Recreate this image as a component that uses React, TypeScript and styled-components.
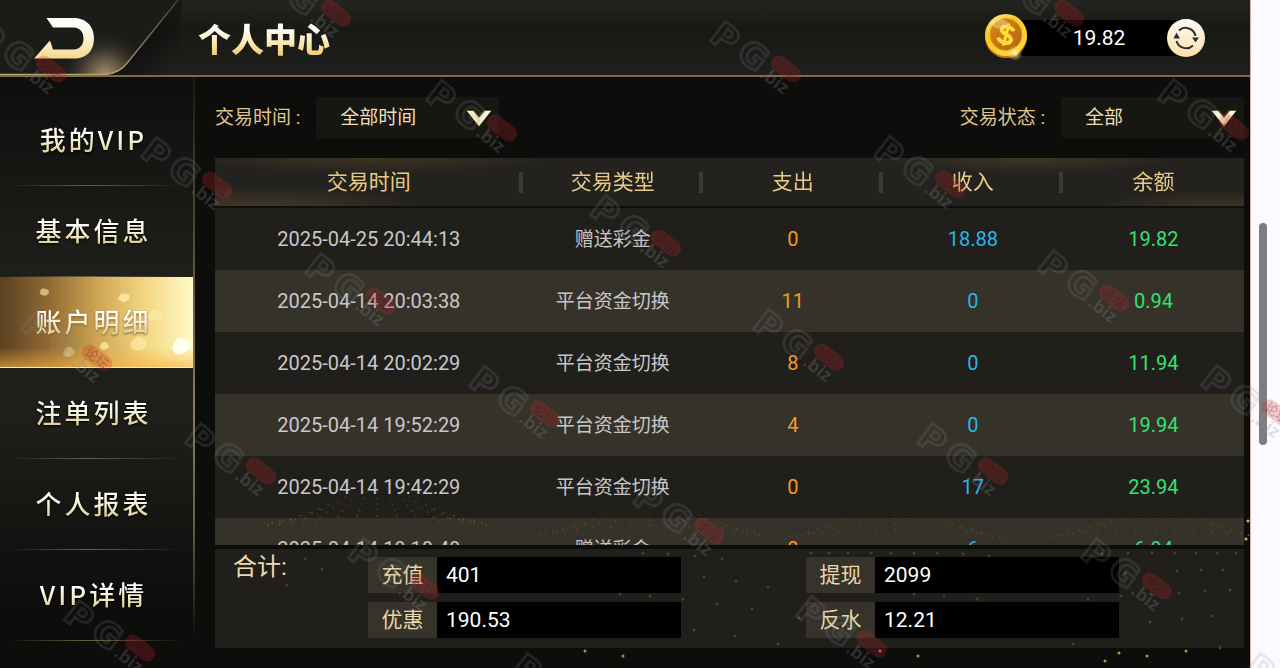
import React from "react";
import styled, { createGlobalStyle, css } from "styled-components";

const sans = `Roboto, "Noto Sans CJK SC", sans-serif`;
const cjk = `"Noto Sans CJK SC", sans-serif`;

const GlobalStyle = createGlobalStyle`
  * { box-sizing: border-box; }
  body { margin: 0; background: #0d0d0c; font-family: ${sans}; }
  button, select, input { font: inherit; }
`;

const Page = styled.div`
  position: relative;
  display: flex;
  height: 100vh;
  overflow: hidden;
`;

const Shell = styled.div`
  flex: 1;
  min-width: 0;
  display: flex;
  flex-direction: column;
  background: #0d0d0c;
`;

const Gutter = styled.div`
  width: 30px;
  padding-left: 8px;
  display: flex;
  align-items: center;
  background: #fdfaff;
  border-left: 1px solid #cdb4a8;
`;

const Thumb = styled.div`
  width: 8px;
  height: 222px;
  border-radius: 4px;
  background: #7f7c80;
`;

const Header = styled.header`
  height: 77px;
  display: flex;
  align-items: center;
  border-bottom: 2px solid #7c6a4b;
  background: linear-gradient(180deg, #23231f 0%, #181815 40%, #1f1f1d 100%);
`;

const BackButton = styled.button`
  width: 182px;
  height: 75px;
  padding: 0;
  border: 0;
  background: none;
  cursor: pointer;

  svg { display: block; }
`;

const Title = styled.h1`
  flex: 1;
  margin: 0;
  padding-left: 16px;
  font: 900 33px/44px ${cjk};
  color: transparent;
  background: linear-gradient(180deg, #ffffff 25%, #fdeec2 55%, #f3cf7c 85%);
  background-clip: text;
`;

const Balance = styled.div`
  display: flex;
  align-items: center;
  margin-right: 45px;
`;

const Amount = styled.output`
  width: 162px;
  height: 36px;
  margin: 0 -13px 0 -10px;
  text-align: center;
  font-size: 21px;
  line-height: 36px;
  color: #ffffff;
  background: #000000;
`;

const CoinIcon = styled.svg`
  position: relative;
  display: block;
`;

const RefreshButton = styled.button`
  position: relative;
  width: 38px;
  height: 38px;
  padding: 0;
  border: 0;
  border-radius: 50%;
  background: linear-gradient(180deg, #fffaf0, #fce0ab);
  cursor: pointer;

  svg { display: block; }
`;

const Body = styled.div`
  flex: 1;
  min-height: 0;
  display: flex;
`;

const Sidebar = styled.nav`
  display: flex;
  flex-direction: column;
  width: 195px;
  padding-top: 18px;
  border-right: 2px solid;
  border-image: linear-gradient(180deg, #1d1a14, #57503a 30%, #8b7d55 55%, #6a6044 75%, #0d0d0c 95%) 1;
  background: linear-gradient(180deg, #0e0e0d 0%, #1e1e1a 32%, #1e1e1a 58%, #0d0d0c 90%);
`;

const NavItem = styled.a<{ $active?: boolean }>`
  position: relative;
  display: flex;
  align-items: center;
  justify-content: center;
  height: 91px;
  padding: 0 6px 2px 0;
  border-bottom: 1px solid;
  border-image: linear-gradient(90deg, transparent 4%, #6a5f42 45%, #4b4430 65%, transparent 95%) 1;
  text-decoration: none;

  ${(p) =>
    p.$active &&
    css`
      border-image: none;
      border-color: #fff0b4;
      background:
        linear-gradient(0deg, rgba(246, 176, 60, 0.6), transparent 22%),
        linear-gradient(90deg, #5b4122 0%, #8f6933 25%, #cda452 50%, #f3d680 75%, #fffac8 100%);
    `}
`;

const NavText = styled.span<{ $active?: boolean }>`
  position: relative;
  font: 500 26px/36px ${cjk};
  letter-spacing: 3px;
  color: transparent;
  background: linear-gradient(180deg, #ffffff 30%, #f3eccb 60%, #d9ca8f 90%);
  background-clip: text;
  filter: drop-shadow(0 1px 1px ${(p) => (p.$active ? "#8a6024" : "#000000")});
`;

const Petals = styled.svg`
  position: absolute;
  inset: 0;
`;

const Main = styled.main`
  position: relative;
  flex: 1;
  min-width: 0;
  display: flex;
  flex-direction: column;
  padding: 20px 6px 20px 20px;
`;

const Sparks = styled.svg`
  position: absolute;
  right: 0;
  bottom: 0;
  pointer-events: none;
`;

const Filters = styled.form`
  position: relative;
  display: flex;
  justify-content: space-between;
  margin-bottom: 20px;
`;

const Filter = styled.label`
  display: flex;
  align-items: center;
  gap: 16px;
  font-size: 19px;
  line-height: 41px;
  color: #dfc58d;
`;

const SelectBox = styled.span`
  position: relative;
  display: block;
  width: 183px;
  height: 41px;

  svg {
    position: absolute;
    right: 7px;
    top: 11px;
    pointer-events: none;
  }
`;

const Select = styled.select`
  appearance: none;
  width: 100%;
  height: 100%;
  padding: 0 40px 0 24px;
  border: 0;
  border-radius: 3px;
  font-size: 19px;
  color: #efdfb4;
  background: #161613;
`;

const TableScroll = styled.div`
  position: relative;
  flex: 1;
  min-height: 0;
  overflow-y: auto;
  scrollbar-width: none;
`;

const Table = styled.table`
  width: 100%;
  table-layout: fixed;
  border-collapse: separate;
  border-spacing: 0;
`;

const Col = styled.col<{ $share: number }>`
  width: ${(p) => p.$share}%;
`;

const Head = styled.thead`
  position: sticky;
  top: 0;
  z-index: 1;
  background:
    radial-gradient(ellipse 190px 16px at 15% 0, rgba(96, 74, 44, 0.45), transparent),
    radial-gradient(ellipse 170px 22px at 4% 100%, rgba(110, 86, 50, 0.45), transparent),
    radial-gradient(ellipse 150px 16px at 79% 0, rgba(96, 82, 44, 0.45), transparent),
    radial-gradient(ellipse 130px 18px at 98% 100%, rgba(96, 82, 44, 0.45), transparent),
    #23221e;
`;

const HeadCell = styled.th`
  position: relative;
  height: 50px;
  padding: 0 0 4px;
  border-bottom: 2px solid #100f0d;
  font-size: 21px;
  font-weight: 400;
  color: #e8ca87;

  &:not(:last-child)::after {
    content: "";
    position: absolute;
    right: 0;
    top: 14px;
    width: 4px;
    height: 21px;
    background: #3b3a38;
  }
`;

const Row = styled.tr`
  background: rgba(38, 36, 31, 0.8);

  &:nth-child(even) { background: rgba(64, 60, 50, 0.8); }
`;

const tones = { plain: "#c9c6c9", out: "#f39a25", in: "#2bb5ea", total: "#35e170" };

const Cell = styled.td<{ $tone: keyof typeof tones; $cjk?: boolean }>`
  height: 62px;
  padding: 0 0 ${(p) => (p.$cjk ? 4 : 0)}px;
  text-align: center;
  font-size: ${(p) => (p.$cjk ? 19 : 20)}px;
  color: ${(p) => tones[p.$tone]};
`;

const Summary = styled.section`
  position: relative;
  display: grid;
  grid-template-columns: 153px 1fr 1fr;
  margin-top: 4px;
  height: 99px;
  background: rgba(38, 36, 31, 0.8);
`;

const SummaryTitle = styled.h2`
  margin: 0;
  padding: 3px 0 0 18px;
  font-size: 24px;
  line-height: 30px;
  font-weight: 400;
  color: #ecdcb0;
`;

const FieldColumn = styled.div`
  display: flex;
  flex-direction: column;
  gap: 9px;
  padding-top: 8px;
`;

const Field = styled.label`
  display: flex;
  width: 313px;
  height: 36px;
  max-width: 100%;
  background: #36332a;
`;

const FieldName = styled.span`
  width: 69px;
  text-align: center;
  font-size: 21px;
  line-height: 36px;
  color: #e9d7ab;
`;

const FieldValue = styled.input`
  flex: 1;
  min-width: 0;
  padding: 0 9px;
  border: 0;
  font-size: 21px;
  color: #ffffff;
  background: #000000;
`;

const MarkLayer = styled.div`
  position: absolute;
  inset: 0;
  z-index: 5;
  overflow: hidden;
  pointer-events: none;
`;

const MarkSvg = styled.svg<{ $x: number; $y: number }>`
  position: absolute;
  left: ${(p) => p.$x}px;
  top: ${(p) => p.$y}px;
  overflow: visible;
`;

const navItems = ["我的VIP", "基本信息", "账户明细", "注单列表", "个人报表", "VIP详情"];

const columns = [
  { name: "交易时间", share: 29.9 },
  { name: "交易类型", share: 17.5 },
  { name: "支出", share: 17.5 },
  { name: "收入", share: 17.5 },
  { name: "余额", share: 17.6 },
];

const records = [
  ["2025-04-25 20:44:13", "赠送彩金", "0", "18.88", "19.82"],
  ["2025-04-14 20:03:38", "平台资金切换", "11", "0", "0.94"],
  ["2025-04-14 20:02:29", "平台资金切换", "8", "0", "11.94"],
  ["2025-04-14 19:52:29", "平台资金切换", "4", "0", "19.94"],
  ["2025-04-14 19:42:29", "平台资金切换", "0", "17", "23.94"],
  ["2025-04-14 19:18:48", "赠送彩金", "0", "6", "6.94"],
];

const totals = [
  [["充值", "401"], ["优惠", "190.53"]],
  [["提现", "2099"], ["反水", "12.21"]],
];

const sparks = [
  [390, 171], [428, 176], [499, 150], [488, 119], [455, 116], [425, 114], [500, 76], [473, 74], [448, 73],
  [527, 79], [509, 97], [541, 101], [522, 124], [557, 129], [540, 156], [583, 164], [604, 138], [573, 107],
  [685, 171], [723, 176], [782, 119], [749, 116], [719, 114], [910, 181], [952, 176], [991, 171], [924, 173],
  [878, 164], [955, 142], [987, 139], [1017, 136], [926, 116], [893, 119], [956, 114], [984, 113], [1010, 111],
  [1035, 110], [930, 93], [982, 91], [1006, 90], [1028, 90], [907, 74], [933, 73], [957, 73], [980, 73],
  [1001, 73], [1022, 73], [1041, 73], [1025, 167], [1053, 41], [1051, 59], [616, 73], [634, 73], [653, 73],
  [676, 73], [696, 73], [719, 73], [742, 73], [768, 74], [794, 76], [110, 79], [127, 89], [92, 105],
];

const fans = [[182, 46], [455, 56], [700, 60], [960, 60]];

function SparkField() {
  return (
    <Sparks width="1055" height="188" viewBox="0 0 1055 188" aria-hidden="true">
      {fans.map(([cx, cy], f) =>
        Array.from({ length: 5 }, (_, ring) =>
          Array.from({ length: 17 }, (_, i) => {
            const a = Math.PI * (1.04 + (i / 16) * 0.92);
            return (
              <circle
                key={`${f}-${ring}-${i}`}
                cx={cx + Math.cos(a) * (110 - ring * 12)}
                cy={cy + Math.sin(a) * (10 + ring * 6)}
                r="1"
                fill="#c8963c"
                opacity={(f === 0 ? 1 : 0.6) - ring * 0.1}
              />
            );
          })
        )
      )}
      {sparks.map(([x, y]) => (
        <circle key={`${x}-${y}`} cx={x} cy={y} r="1.5" fill="#e8b04c" opacity={y > 168 ? 0.8 : 1} />
      ))}
    </Sparks>
  );
}

const marks = [
  [708, 20], [424, 79], [872, 135], [588, 194], [303, 252], [1036, 249], [751, 308], [467, 365], [1199, 364],
  [183, 422], [915, 422], [631, 482], [346, 537], [1079, 537], [794, 595], [62, 599], [1156, 78], [139, 136],
  [19, 309], [258, -36], [991, -36], [-27, 20], [510, 652], [1243, 652],
];

function Mark({ x, y }: { x: number; y: number }) {
  return (
    <MarkSvg $x={x} $y={y} width="94" height="80" viewBox="0 0 94 80" aria-hidden="true">
      <g transform="translate(0 19) rotate(38)">
        <text
          x="0 32"
          y="0 -3"
          fontFamily="DejaVu Sans, sans-serif"
          fontWeight="700"
          fontSize="34"
          fill="none"
          stroke="#8c8c92"
          strokeWidth="3"
          opacity="0.18"
        >
          PG
        </text>
      </g>
      <g transform="translate(78 49) rotate(38)">
        <rect x="-17" y="-8" width="34" height="16" rx="8" fill="#d02a30" opacity="0.24" />
        <text x="0" y="5" textAnchor="middle" fontFamily={cjk} fontSize="13" fill="#301010" opacity="0.3">
          论坛
        </text>
      </g>
      <text
        transform="translate(51 56) rotate(38)"
        fontFamily="Open Sans, sans-serif"
        fontWeight="700"
        fontSize="18"
        fill="#8c8c92"
        opacity="0.25"
      >
        .biz
      </text>
    </MarkSvg>
  );
}

function BackArt() {
  return (
    <svg width="182" height="75" viewBox="0 0 182 75" aria-hidden="true">
      <defs>
        <linearGradient id="arrow" x1="0" y1="0" x2="0" y2="1">
          <stop offset="0.1" stopColor="#ffffff" />
          <stop offset="0.55" stopColor="#fdf0d0" />
          <stop offset="1" stopColor="#f8d68c" />
        </linearGradient>
        <linearGradient id="edge" x1="1" y1="0" x2="0.6" y2="1">
          <stop offset="0" stopColor="#4a4232" />
          <stop offset="1" stopColor="#b8a074" />
        </linearGradient>
        <radialGradient id="glow" gradientUnits="userSpaceOnUse" cx="105" cy="76" r="46">
          <stop offset="0" stopColor="#a8946a" />
          <stop offset="0.4" stopColor="#5b5140" />
          <stop offset="1" stopColor="#1c1b18" stopOpacity="0" />
        </radialGradient>
        <linearGradient id="shade" x1="0" y1="0" x2="1" y2="0.7">
          <stop offset="0" stopColor="#000000" stopOpacity="0.9" />
          <stop offset="1" stopColor="#000000" stopOpacity="0" />
        </linearGradient>
      </defs>
      <path d="M178 0 L133 57 Q122 74 108 75 H176 L182 0 Z" fill="url(#shade)" />
      <path d="M0 0 H178 L128 62 Q119 74 104 75 H0 Z" fill="#1b1b18" />
      <path d="M0 0 H178 L128 62 Q119 74 104 75 H0 Z" fill="url(#glow)" />
      <path d="M178 0 L128 62 Q119 74 104 74.500 H0" fill="none" stroke="url(#edge)" strokeWidth="1.300" />
      <path
        d="M46.500 18 H76 C87 19 94 27 94 38.500 C94 50 87 58 76 58.500 H34 L50 40.500 L53 49.500 H74 C80 49 83.500 45 83.500 38.500 C83.500 32 80 28 74 27.500 H53 Z"
        fill="url(#arrow)"
      />
    </svg>
  );
}

function Coin() {
  return (
    <CoinIcon width="44" height="48" viewBox="0 0 44 48" aria-hidden="true">
      <defs>
        <linearGradient id="rim" x1="0" y1="0" x2="0.6" y2="1">
          <stop offset="0" stopColor="#fff0a0" />
          <stop offset="0.4" stopColor="#f8c828" />
          <stop offset="1" stopColor="#ffd83c" />
        </linearGradient>
        <linearGradient id="face" x1="0" y1="0" x2="1" y2="1">
          <stop offset="0" stopColor="#d98a1c" />
          <stop offset="1" stopColor="#b3620f" />
        </linearGradient>
        <radialGradient id="flare">
          <stop offset="0" stopColor="#fffbe0" />
          <stop offset="0.4" stopColor="#ffe680" stopOpacity="0.6" />
          <stop offset="1" stopColor="#ffd040" stopOpacity="0" />
        </radialGradient>
      </defs>
      <circle cx="22" cy="23" r="21" fill="#c97708" />
      <circle cx="22" cy="21" r="21" fill="url(#rim)" />
      <circle cx="22" cy="20.500" r="16" fill="url(#face)" stroke="#e09a14" />
      <g transform="translate(0 -1) rotate(14 22 22)" fill="none" stroke="#ffdc3c" strokeWidth="4">
        <path d="M28.500 16.500 C26 12.500 16.500 13 16.500 17.500 C16.500 22.500 28 20 28 26 C28 31 18 31 15 26.500" />
        <path d="M22 10 V33" strokeWidth="3" />
      </g>
      <ellipse cx="16" cy="10" rx="8" ry="5" fill="#fff6c0" opacity="0.35" />
      <circle cx="31" cy="39" r="8" fill="url(#flare)" />
    </CoinIcon>
  );
}

function Chevron() {
  return (
    <svg width="26" height="20" viewBox="0 0 26 20" aria-hidden="true">
      <defs>
        <linearGradient id="chev" x1="0" y1="0" x2="0" y2="1">
          <stop offset="0" stopColor="#fffdf0" />
          <stop offset="1" stopColor="#f6e9a8" />
        </linearGradient>
      </defs>
      <path d="M0 2 H8 L13 8 L18 2 H26 L13 19 Z" fill="#8f8a34" opacity="0.55" />
      <path d="M1 3 H7 L13 10 L19 3 H25 L13 18 Z" fill="url(#chev)" />
    </svg>
  );
}

function PetalArt() {
  return (
    <Petals width="193" height="91" viewBox="0 0 193 91" aria-hidden="true">
      <g fill="#ffefad">
        <path d="M40 14 q2 -4 5 -2 q4 0 4 4 q-3 4 -7 2 q-3 -1 -2 -4Z" opacity="0.6" />
        <path d="M119 20 q2 -5 6 -3 q6 -1 4 5 q-4 5 -8 2 q-4 -1 -2 -4Z" opacity="0.8" />
        <path d="M149 36 q5 -6 9 -2 q6 2 3 7 q-6 5 -11 2 q-4 -3 -1 -7Z" opacity="0.5" />
        <path d="M64 74 q4 -7 8 -3 q5 3 1 7 q-5 4 -8 1 q-3 -2 -1 -5Z" opacity="0.4" />
        <path d="M101 67 q3 -4 6 -1 q4 3 0 6 q-4 2 -7 -1 q-1 -2 1 -4Z" opacity="0.7" />
        <path d="M132 64 q5 -7 10 -3 q7 2 4 8 q-6 7 -13 3 q-5 -3 -1 -8Z" opacity="0.6" />
        <path d="M174 66 q4 -8 10 -4 q8 1 5 10 q-6 7 -13 5 q-6 -5 -2 -11Z" fill="#fffff2" />
      </g>
    </Petals>
  );
}

export default function App() {
  return (
    <Page>
      <GlobalStyle />
      <Shell>
        <Header>
          <BackButton type="button" aria-label="返回">
            <BackArt />
          </BackButton>
          <Title>个人中心</Title>
          <Balance>
            <Coin />
            <Amount>19.82</Amount>
            <RefreshButton type="button" aria-label="刷新">
              <svg width="38" height="38" viewBox="0 0 38 38" aria-hidden="true">
                <g fill="none" stroke="#27313a" strokeWidth="2">
                  <path d="M9.500 22 A10 10 0 0 0 26 26.500" />
                  <path d="M28.500 17 A10 10 0 0 0 12 11.500" />
                </g>
                <path d="M6.500 19.500 L9.500 13.500 L13 19.500 Z M25 18.500 L32 18.500 L28.500 23.500 Z" fill="#27313a" />
              </svg>
            </RefreshButton>
          </Balance>
        </Header>
        <Body>
          <Sidebar>
            {navItems.map((name) => {
              const active = name === "账户明细";
              return (
                <NavItem key={name} href="#" $active={active} aria-current={active ? "page" : undefined}>
                  {active && <PetalArt />}
                  <NavText $active={active}>{name}</NavText>
                </NavItem>
              );
            })}
          </Sidebar>
          <Main>
            <SparkField />
            <Filters>
              <Filter>
                交易时间 :
                <SelectBox>
                  <Select>
                    <option>全部时间</option>
                  </Select>
                  <Chevron />
                </SelectBox>
              </Filter>
              <Filter>
                交易状态 :
                <SelectBox>
                  <Select>
                    <option>全部</option>
                  </Select>
                  <Chevron />
                </SelectBox>
              </Filter>
            </Filters>
            <TableScroll>
              <Table>
                <colgroup>
                  {columns.map((c) => (
                    <Col key={c.name} $share={c.share} />
                  ))}
                </colgroup>
                <Head>
                  <tr>
                    {columns.map((c) => (
                      <HeadCell key={c.name} scope="col">
                        {c.name}
                      </HeadCell>
                    ))}
                  </tr>
                </Head>
                <tbody>
                  {records.map(([time, kind, spent, income, balance]) => (
                    <Row key={time}>
                      <Cell $tone="plain">{time}</Cell>
                      <Cell $tone="plain" $cjk>
                        {kind}
                      </Cell>
                      <Cell $tone="out">{spent}</Cell>
                      <Cell $tone="in">{income}</Cell>
                      <Cell $tone="total">{balance}</Cell>
                    </Row>
                  ))}
                </tbody>
              </Table>
            </TableScroll>
            <Summary>
              <SummaryTitle>合计:</SummaryTitle>
              {totals.map((group, i) => (
                <FieldColumn key={i}>
                  {group.map(([name, value]) => (
                    <Field key={name}>
                      <FieldName>{name}</FieldName>
                      <FieldValue readOnly value={value} />
                    </Field>
                  ))}
                </FieldColumn>
              ))}
            </Summary>
          </Main>
        </Body>
      </Shell>
      <Gutter>
        <Thumb />
      </Gutter>
      <MarkLayer>
        {marks.map(([x, y]) => (
          <Mark key={`${x},${y}`} x={x} y={y} />
        ))}
      </MarkLayer>
    </Page>
  );
}
